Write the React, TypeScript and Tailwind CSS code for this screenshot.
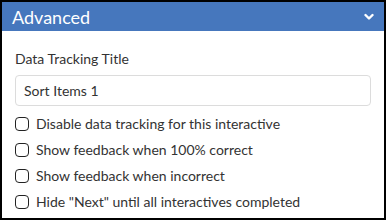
export default function App() {
  const options = [
    'Disable data tracking for this interactive',
    'Show feedback when 100% correct',
    'Show feedback when incorrect',
    'Hide "Next" until all interactives completed',
  ];

  return (
    <div className="w-[386px] h-[220px] border-2 border-black bg-white font-['Lato',sans-serif] text-[#333]">
      <div className="flex items-center justify-between h-[29px] bg-[#4677bd] pl-[10px] pr-[10px] text-white">
        <span className="text-[18px] leading-none">Advanced</span>
        <svg width="10" height="8" viewBox="0 0 10 8" className="mt-[1px]">
          <path d="M1.5 2 L5 5.5 L8.5 2" stroke="white" strokeWidth="2.4" fill="none" strokeLinecap="round" strokeLinejoin="round" />
        </svg>
      </div>
      <div className="px-[13px] pt-[19px]">
        <label className="block text-[14px] leading-[18px] mb-[7px]">Data Tracking Title</label>
        <div className="h-[31px] border border-[#dcdcdc] rounded-[4px] flex items-center px-[8px] text-[14px]">
          Sort Items 1
        </div>
        <div className="mt-[9px] flex flex-col gap-[8px]">
          {options.map(o => (
            <label key={o} className="flex items-center gap-[7px] text-[14px] leading-[18px]">
              <span className="w-[14px] h-[14px] border border-[#222] rounded-[4px] shrink-0" />
              {o}
            </label>
          ))}
        </div>
      </div>
    </div>
  );
}
